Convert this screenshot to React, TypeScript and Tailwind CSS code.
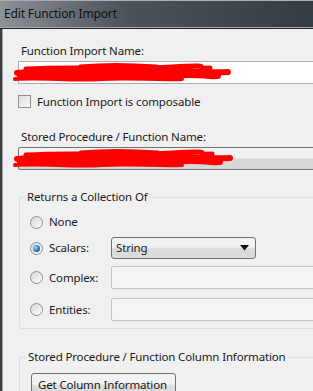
import React from "react";

function Scribble({ w }: { w: number }) {
  return (
    <svg width={w} height="22" viewBox={`0 0 ${w} 22`} className="absolute left-[-7px] top-[0px]">
      <g stroke="#f00" fill="none" strokeLinecap="round" strokeLinejoin="round">
        <path strokeWidth="6" d={`M5 11 C 40 7, 80 13, 120 9 S 190 12, ${w - 10} 10`} />
        <path strokeWidth="6" d={`M8 15 C 50 12, 100 17, 150 14 S ${w - 40} 15, ${w - 20} 14`} />
        <path strokeWidth="5" d={`M14 7 C 60 4, 110 8, 160 5 S ${w - 50} 7, ${w - 28} 6`} />
        <path strokeWidth="4" d={`M3 17 C 30 15, 60 19, 90 17 S 140 18, 170 17`} />
        <path strokeWidth="3" d={`M${w * 0.3} 4 C ${w * 0.42} 1.5, ${w * 0.55} 2.5, ${w * 0.64} 4`} />
        <path strokeWidth="2" d={`M${w * 0.1} 12 L ${w * 0.9} 12`} />
      </g>
    </svg>
  );
}

function Radio({ checked }: { checked?: boolean }) {
  return (
    <div className="w-[13px] h-[13px] rounded-full border border-[#8f8f8f] bg-gradient-to-br from-[#d8d8d8] to-[#fbfbfb] flex items-center justify-center shrink-0">
      {checked && (
        <div className="w-[7px] h-[7px] rounded-full bg-[radial-gradient(circle_at_35%_35%,#a9d6f5,#2a6bb0_60%,#1b3f72)]" />
      )}
    </div>
  );
}

export default function App() {
  return (
    <div className="w-[313px] h-[391px] overflow-hidden bg-[#f0f0f0] font-['Noto_Sans',sans-serif] text-[11.5px] tracking-[-0.15px] text-[#1a1a1a] flex flex-col">
      {/* title bar */}
      <div className="h-[27px] shrink-0 bg-gradient-to-r from-[#8d9297] via-[#4c535a] via-40% to-[#353c44] border-t border-[#a9aeb3] flex items-center pl-[4px]">
        <span className="text-[12px] text-[#101010]">Edit Function Import</span>
      </div>
      <div className="h-[1px] bg-[#a7adb3] shrink-0" />
      <div className="h-[1px] bg-[#1f2328] shrink-0" />
      {/* body */}
      <div className="flex flex-1 min-h-0">
        <div className="w-[2px] bg-[#3d4146] shrink-0" />
        <div className="w-[1px] bg-[#9aa0a6] shrink-0" />
        <div className="flex-1 pl-[15px] flex flex-col">
          <div className="w-[400px] flex flex-col">
            <div className="mt-[14px] pl-[3px] leading-[16px]">Function Import Name:</div>
            <div className="relative mt-[2px] h-[23px] bg-white border border-[#abadb3]">
              <Scribble w={226} />
            </div>
            <div className="mt-[11px] flex items-center h-[13px]">
              <div className="w-[13px] h-[13px] border border-[#8e8f8f] bg-gradient-to-br from-[#dcdcdc] to-[#f9f9f9] shrink-0" />
              <span className="ml-[6px] leading-[16px]">Function Import is composable</span>
            </div>
            <div className="mt-[21px] pl-[3px] leading-[16px]">Stored Procedure / Function Name:</div>
            <div className="relative mt-[2px] h-[23px] rounded-[2px] bg-gradient-to-b from-[#f2f2f2] from-45% to-[#d8d8d8] to-55% border border-[#707070]">
              <Scribble w={228} />
            </div>
            <fieldset className="mt-[19px] ml-[1px] border border-[#d5dfe5] rounded-[3px] pl-[10px] pb-[10px] h-[140px]">
              <legend className="ml-[-5px] px-[2px] leading-[16px]">Returns a Collection Of</legend>
              <div className="flex items-center h-[22px] mt-[6px]">
                <Radio />
                <span className="ml-[6px]">None</span>
              </div>
              <div className="flex items-center h-[22px] mt-[4px]">
                <Radio checked />
                <span className="ml-[6px] w-[62px]">Scalars:</span>
                <div className="w-[145px] h-[22px] rounded-[3px] border border-[#707070] bg-gradient-to-b from-[#f2f2f2] from-45% to-[#dbdbdb] to-55% flex items-center pl-[4px] pr-[6px] justify-between">
                  <span>String</span>
                  <svg width="9" height="6" viewBox="0 0 9 6"><path d="M0 0 H9 L4.5 5.5 Z" fill="#111" /></svg>
                </div>
              </div>
              <div className="flex items-center h-[23px] mt-[7px]">
                <Radio />
                <span className="ml-[6px] w-[62px]">Complex:</span>
                <div className="flex-1 h-[23px] rounded-[2px] border border-[#c4c4c4] bg-[#f4f4f4]" />
              </div>
              <div className="flex items-center h-[23px] mt-[9px]">
                <Radio />
                <span className="ml-[6px] w-[62px]">Entities:</span>
                <div className="flex-1 h-[23px] rounded-[2px] border border-[#c4c4c4] bg-[#f4f4f4]" />
              </div>
            </fieldset>
            <fieldset className="mt-[20px] ml-[1px] border border-[#d5dfe5] rounded-[3px] pl-[11px] h-[80px]">
              <legend className="ml-[-5px] px-[2px] leading-[16px]">Stored Procedure / Function Column Information</legend>
              <div className="mt-[8px] w-[145px] h-[24px] rounded-[3px] border border-[#707070] bg-gradient-to-b from-[#f2f2f2] from-45% to-[#dbdbdb] to-55% flex items-center pl-[6px] whitespace-nowrap">
                Get Column Information
              </div>
            </fieldset>
          </div>
        </div>
      </div>
    </div>
  );
}
